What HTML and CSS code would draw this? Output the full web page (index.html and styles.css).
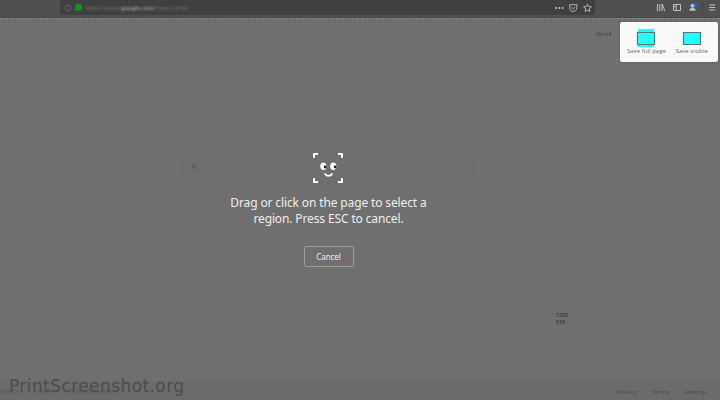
FILE: index.html
```html
<!DOCTYPE html>
<html lang="en">
<head>
<meta charset="utf-8">
<title>Screenshot capture</title>
<link rel="stylesheet" href="styles.css">
</head>
<body>
<div class="window">
  <header class="toolbar">
    <div class="address">
      <svg class="info" viewBox="0 0 8 8"><circle cx="4" cy="4" r="3"/><path d="M4 3.5v2M4 2v.6"/></svg>
      <i class="lock"></i>
      <span class="url">https://www.<b>google.com</b>/?gws_rd=ssl</span>
      <svg class="page-actions" viewBox="0 0 38 12">
        <g class="fill"><circle cx="2" cy="6" r="1.05"/><circle cx="5.3" cy="6" r="1.05"/><circle cx="8.6" cy="6" r="1.05"/></g>
        <path d="M15.7 2.7h7.1v3c0 5-7.1 5-7.1 0zM17.4 5.1l1.9 1.7 1.9-1.7"/>
        <path d="M33.5 2l1.1 2.5 2.8.3-2.1 1.9.6 2.8-2.4-1.4-2.4 1.4.6-2.8-2.1-1.9 2.8-.3z"/>
      </svg>
    </div>
    <svg class="tools" viewBox="0 0 64 16">
      <path d="M2.5 4v7M4.8 4v7M7 4.2v6.8M7.3 4l2.5 7"/>
      <path d="M18.5 4.5h7v6h-7zM21.2 4.5v6M19 6.5h1.5"/>
      <g class="fill"><circle cx="37.5" cy="5.7" r="2"/><path d="M34.3 10.8c0-4 6.4-4 6.4 0z"/></g>
      <circle class="dot" cx="40.5" cy="5" r="1.7"/>
      <path class="divider" d="M47.5 2v11"/>
      <path d="M54.2 5h6M54.2 7.5h6M54.2 10h6"/>
    </svg>
  </header>
  <main class="page">
    <span class="gmail">Gmail</span>
    <aside class="save-panel">
      <div class="save">
        <svg class="save-icon" viewBox="0 0 20 20"><path class="cyan" d="M2 1h16v18H2z"/><path class="frame" d="M1.5 4.5h17v12h-17z"/></svg>
        <span>Save full page</span>
      </div>
      <div class="save">
        <svg class="save-icon" viewBox="0 0 20 20"><path class="frame" d="M1.5 4.5h17v12h-17z"/></svg>
        <span>Save visible</span>
      </div>
    </aside>
    <div class="searchbox"><svg viewBox="0 0 8 8"><circle cx="3" cy="3" r="2"/><path d="M4.5 4.5l2.5 2.5"/></svg></div>
    <section class="prompt">
      <svg class="face" viewBox="0 0 32 32">
        <path class="corner" d="M2 6V2h4M26 2h4v4M30 26v4h-4M6 30H2v-4"/>
        <g class="white"><ellipse cx="11.4" cy="14.3" rx="3.1" ry="3.8"/><ellipse cx="21.3" cy="14.3" rx="3.1" ry="3.8"/></g>
        <g class="pupil"><circle cx="13.2" cy="15" r="1.4"/><circle cx="23.1" cy="15" r="1.4"/></g>
        <path class="smile" d="M13.1 22c1.3 2.5 5.6 2.5 6.9 0"/>
      </svg>
      <p><span class="line-one">Drag or click on the page to select a</span><br><span class="line-two">region. Press ESC to cancel.</span></p>
      <button>Cancel</button>
    </section>
    <div class="coords">1220<br>574</div>
    <div class="watermark">PrintScreenshot.org</div>
    <footer><i class="w20"></i><i class="w17"></i><i class="w50"></i><nav><span>Privacy</span><span>Terms</span><span>Settings</span></nav></footer>
  </main>
</div>
</body>
</html>
```
FILE: styles.css
```css
* { box-sizing: border-box; }
body { margin: 0; font-family: "Noto Sans", sans-serif; }
svg { display: block; fill: none; stroke: #c0c0c0; stroke-width: 1; }
.window { width: 720px; height: 400px; overflow: hidden; background: #6f6f6f; }
.toolbar { display: flex; height: 18px; padding-left: 60px; background: #505050; border-bottom: 1px solid #494949; }
.address { display: flex; align-items: center; width: 535px; height: 15px; padding: 0 3px 0 4px; background: #404040; border-radius: 0 0 2px 2px; }
.info { width: 8px; height: 8px; stroke: #606060; filter: blur(.4px); }
.lock { width: 7px; height: 7px; margin: 0 4px 0 3px; border-radius: 3px; background: #159615; filter: blur(.7px); }
.url { flex: 1; font-size: 5.6px; line-height: 12px; color: #777; letter-spacing: .1px; filter: blur(.8px); }
.url b { font-weight: 600; color: #aaa; }
.page-actions { width: 38px; height: 12px; stroke-width: .9; }
.fill { fill: #c0c0c0; stroke: none; }
.tools { width: 64px; height: 16px; margin-left: 60px; }
.tools .dot { fill: #0878e8; stroke: none; }
.tools .divider { stroke: #454545; }
.page { position: relative; height: 382px; border-top: 1px dashed #888; }
.gmail { position: absolute; left: 596px; top: 10px; font-size: 5.7px; line-height: 10px; color: #444; filter: blur(.7px); }
.save-panel { position: absolute; left: 620px; top: 3px; width: 98px; height: 40px; display: flex; padding: 6px 10px 0 7px; justify-content: space-between; background: #f9f9f9; border-radius: 2px; box-shadow: 0 0 2px #555; }
.save { display: flex; flex-direction: column; align-items: center; font-family: "Open Sans", sans-serif; font-size: 6px; line-height: 8px; color: #666; white-space: nowrap; letter-spacing: .03px; }
.save-icon { width: 20px; height: 20px; margin-bottom: -1px; }
.cyan { fill: #2ff; stroke: none; }
.frame { fill: #2ff; stroke: #577777; stroke-width: 1.2; }
.searchbox { position: absolute; left: 182px; top: 137px; width: 292px; height: 27px; padding: 6px 8px; border: 1px solid #6c6c6c; border-radius: 14px; }
.searchbox svg { width: 8px; height: 8px; stroke: #585858; }
.prompt { position: absolute; left: 0; top: 133px; width: 657px; display: flex; flex-direction: column; align-items: center; color: #eee; }
.face { width: 32px; height: 32px; margin-right: 1px; }
.corner { stroke: #fff; stroke-width: 2; }
.white { fill: #fff; stroke: none; }
.pupil { fill: #222; stroke: none; }
.smile { stroke: #fff; stroke-width: 1.7; stroke-linecap: round; }
.prompt p { margin: 11px 0 19px; text-align: center; font-size: 12px; line-height: 16px; white-space: nowrap; }
.line-one { letter-spacing: -.13px; }
.line-two { letter-spacing: -.13px; }
.prompt button { width: 50px; height: 21px; padding: 0; border: 1px solid #999; border-radius: 2px; background: transparent; color: #eee; font: 8px/18px "Noto Sans", sans-serif; letter-spacing: -.1px; }
.coords { position: absolute; left: 556px; top: 293px; font-size: 5.2px; line-height: 7px; font-weight: 600; color: #333; filter: blur(.25px); }
.watermark { position: absolute; left: 9px; top: 356px; font: 17px/22px "DejaVu Sans", sans-serif; letter-spacing: .42px; color: #4c4c4c; white-space: nowrap; z-index: 1; }
footer { position: absolute; left: 0; bottom: 0; width: 720px; height: 19px; display: flex; gap: 15px; padding: 5px 13px 0 0; background: #6b6b6b; font-size: 6px; line-height: 12px; color: #4d4d4d; }
footer i { height: 3px; margin-top: 4px; background: #606060; filter: blur(1px); }
.w20 { width: 20px; }
.w17 { width: 17px; }
.w50 { width: 50px; }
footer nav { margin-left: auto; display: flex; gap: 15px; filter: blur(.6px); }
```
